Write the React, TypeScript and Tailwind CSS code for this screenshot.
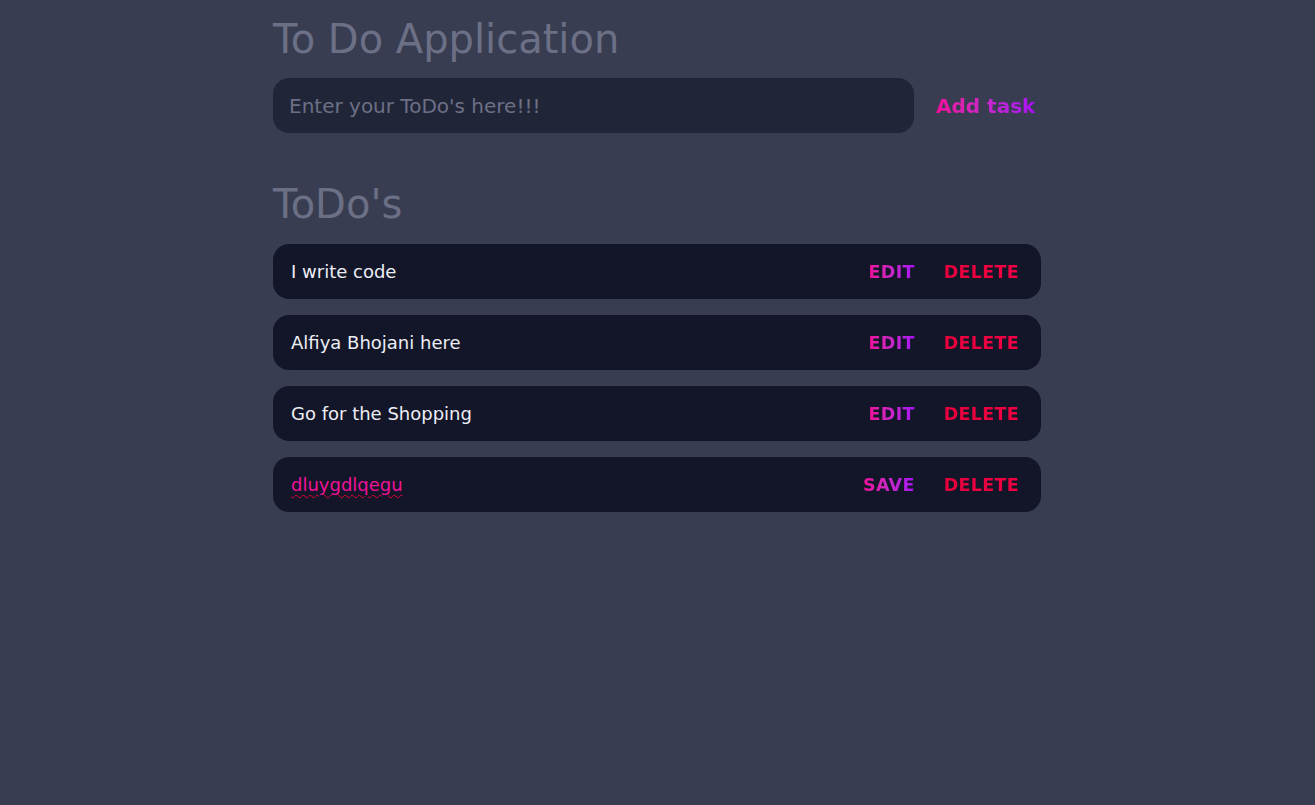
import React from "react";

const grad = "bg-gradient-to-r from-[#ee0a9a] to-[#a80af5] bg-clip-text text-transparent";
const red = "bg-gradient-to-r from-[#e6003d] to-[#f20042] bg-clip-text text-transparent";

function Item({ text, editing }: { text: string; editing?: boolean }) {
  return (
    <div className="flex h-[55px] items-center justify-between rounded-2xl bg-[#131628] pl-[18px] pr-[22px]">
      {editing ? (
        <span className="text-[18px] text-[#f0129a] underline decoration-wavy decoration-[#e0003a] decoration-1 underline-offset-[3px]">
          {text}
        </span>
      ) : (
        <span className="text-[18px] text-[#eceef5]">{text}</span>
      )}
      <div className="flex items-center gap-[29px] pt-[1px] text-[17.5px] font-bold tracking-[0.3px]">
        <span className={grad}>{editing ? "SAVE" : "EDIT"}</span>
        <span className={red}>DELETE</span>
      </div>
    </div>
  );
}

export default function App() {
  return (
    <div
      className="min-h-[805px] bg-[#393d51]"
      style={{ fontFamily: '"DejaVu Sans", sans-serif' }}
    >
      <div className="ml-[273px] w-[768px] pt-[14px]">
        <h1 className="text-[40px] leading-[50px] text-[#6c7086]">To Do Application</h1>
        <div className="mt-[14px] flex items-center">
          <div className="flex h-[55px] w-[641px] items-center rounded-2xl bg-[#212538] px-[16px] text-[20px] text-[#6c7086]">
            Enter your ToDo's here!!!
          </div>
          <span className={"ml-[22px] text-[20px] font-bold " + grad}>Add task</span>
        </div>
        <h2 className="mt-[46px] text-[40px] leading-[50px] text-[#6c7086]">ToDo's</h2>
        <div className="mt-[15px] flex flex-col gap-[16px]">
          <Item text="I write code" />
          <Item text="Alfiya Bhojani here" />
          <Item text="Go for the Shopping" />
          <Item text="dluygdlqegu" editing />
        </div>
      </div>
    </div>
  );
}
